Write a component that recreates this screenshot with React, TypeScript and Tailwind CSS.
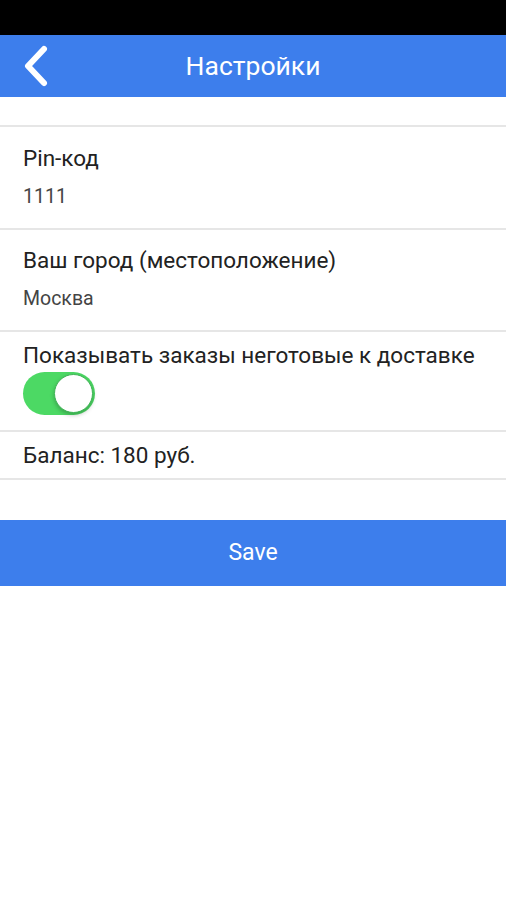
import React, { useState } from "react";

const font = { fontFamily: "Roboto, 'Noto Sans', sans-serif" };

function Toggle({ on, onChange }: { on: boolean; onChange: () => void }) {
  return (
    <button
      onClick={onChange}
      className={`relative w-[72px] h-[43px] rounded-full ${on ? "bg-[#4cd964]" : "bg-[#e5e5e5]"}`}
    >
      <span
        className={`absolute top-[2px] w-[39px] h-[39px] rounded-full bg-white border border-[#3fb556] shadow-[0_2px_4px_rgba(0,0,0,0.25)] ${on ? "left-[31px]" : "left-[2px]"}`}
      />
    </button>
  );
}

function Divider() {
  return <div className="h-[2px] bg-[#e6e6e6]" />;
}

export default function App() {
  const [showUnready, setShowUnready] = useState(true);

  return (
    <div className="w-[506px] h-[900px] bg-white flex flex-col" style={font}>
      <div className="h-[35px] bg-black" />
      <div className="h-[62px] bg-[#3d7eec] relative flex items-center justify-center">
        <button className="absolute left-[21px] top-[9px]">
          <svg width="28" height="44" viewBox="0 0 28 44">
            <polyline
              points="23,5 7,22 23,39"
              fill="none"
              stroke="white"
              strokeWidth="6"
              strokeLinecap="round"
              strokeLinejoin="round"
            />
          </svg>
        </button>
        <h1 className="text-white text-[26.5px] leading-none">Настройки</h1>
      </div>

      <div className="h-[28px]" />
      <Divider />

      <div className="px-[23px] pt-[18px] pb-[20px]">
        <div className="text-[22.5px] leading-[26px] text-[#222]">Pin-код</div>
        <div className="mt-[15px] text-[19.5px] leading-[22px] text-[#444]">1111</div>
      </div>
      <Divider />

      <div className="px-[23px] pt-[17px] pb-[20px]">
        <div className="text-[22.5px] leading-[26px] text-[#222]">Ваш город (местоположение)</div>
        <div className="mt-[15px] text-[19.5px] leading-[22px] text-[#444]">Москва</div>
      </div>
      <Divider />

      <div className="px-[23px] pt-[10px] pb-[15px]">
        <div className="text-[22.5px] leading-[26px] text-[#222] whitespace-nowrap">
          Показывать заказы неготовые к доставке
        </div>
        <div className="mt-[4px] flex">
          <Toggle on={showUnready} onChange={() => setShowUnready(!showUnready)} />
        </div>
      </div>
      <Divider />

      <div className="px-[23px] pt-[10px] pb-[10px]">
        <div className="text-[22.5px] leading-[26px] text-[#222]">Баланс: 180 руб.</div>
      </div>
      <Divider />

      <div className="h-[40px]" />
      <button className="h-[66px] bg-[#3d7eec] text-white text-[23px] flex items-center justify-center">
        Save
      </button>
    </div>
  );
}
